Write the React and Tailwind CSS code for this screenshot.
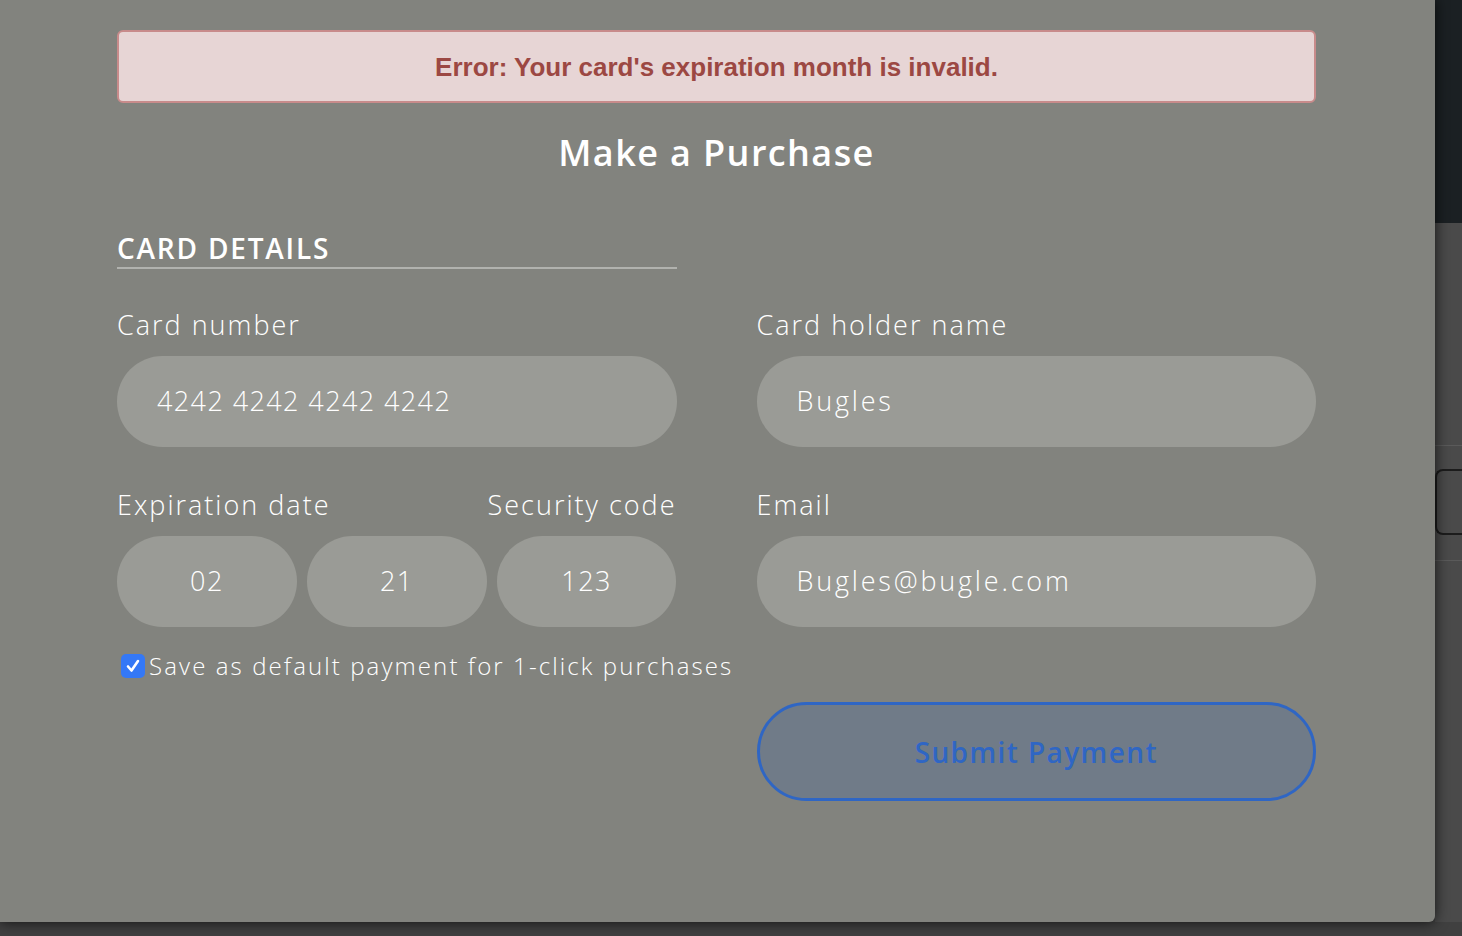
import { useState } from "react";

const font = { fontFamily: '"Open Sans", "DejaVu Sans", sans-serif' };

function Field({ label, value, track = "tracking-[2px]" }) {
  return (
    <div className="flex flex-col gap-[15px]">
      <div className="text-[27px] leading-[32px] font-light text-white tracking-[2px]">
        {label}
      </div>
      <div className={"h-[91px] rounded-full bg-[#9a9b96] flex items-center px-[40px] text-[27px] font-light text-white " + track}>
        {value}
      </div>
    </div>
  );
}

function SmallBox({ value }) {
  return (
    <div className="h-[91px] rounded-full bg-[#9a9b96] flex items-center justify-center text-[27px] font-light text-white tracking-[1.4px]">
      {value}
    </div>
  );
}

export default function App() {
  const [saveDefault, setSaveDefault] = useState(true);

  return (
    <div className="w-[1462px] h-[936px] overflow-hidden flex flex-col bg-[#404040]" style={font}>
      <div className="flex h-[922px]">
        {/* modal */}
        <div className="relative z-10 w-[1435px] h-[922px] shrink-0 bg-[#82837e] rounded-br-[6px] shadow-[0_0_14px_rgba(0,0,0,0.75)] pl-[117px] pr-[119px] pt-[30px]">
          {/* error banner */}
          <div className="h-[73px] rounded-[6px] border-2 border-[#c88b8b] bg-[#e7d5d5] flex items-center justify-center">
            <span
              className="text-[26px] leading-[30px] font-bold text-[#9c4843]"
              style={{ fontFamily: '"Liberation Sans", Arial, sans-serif' }}
            >
              Error: Your card's expiration month is invalid.
            </span>
          </div>

          <h1 className="mt-[28px] text-center text-[36px] leading-[44px] font-semibold text-white tracking-[1.4px]">
            Make a Purchase
          </h1>

          <div className="mt-[56px] w-[560px] border-b-2 border-[#b1b2ae] pb-[2px]">
            <h2 className="text-[28px] leading-[34px] font-semibold text-white tracking-[1.8px]">
              CARD DETAILS
            </h2>
          </div>

          {/* form grid */}
          <div className="mt-[40px] grid grid-cols-2 gap-x-[80px] gap-y-[42px]">
            <Field label="Card number" value="4242 4242 4242 4242" track="tracking-[1.4px]" />
            <Field label="Card holder name" value="Bugles" track="tracking-[2.8px]" />
            <div className="flex flex-col gap-[15px]">
              <div className="flex justify-between text-[27px] leading-[32px] font-light text-white tracking-[2px]">
                <span>Expiration date</span>
                <span>Security code</span>
              </div>
              <div className="grid grid-cols-3 gap-[10px]">
                <SmallBox value="02" />
                <SmallBox value="21" />
                <SmallBox value="123" />
              </div>
            </div>
            <Field label="Email" value="Bugles@bugle.com" track="tracking-[2.8px]" />
          </div>

          {/* checkbox */}
          <label className="mt-[24px] flex items-center gap-[4px] pl-[4px] h-[30px] cursor-pointer">
            <span
              onClick={() => setSaveDefault(!saveDefault)}
              className={
                saveDefault
                  ? "w-[24px] h-[24px] rounded-[5px] bg-[#3478f6] flex items-center justify-center"
                  : "w-[24px] h-[24px] rounded-[5px] bg-white"
              }
            >
              {saveDefault && (
                <svg width="16" height="16" viewBox="0 0 16 16">
                  <path d="M3 8.5 L6.5 12.5 L13 3" fill="none" stroke="#fff" strokeWidth="2.6" strokeLinecap="round" strokeLinejoin="round" />
                </svg>
              )}
            </span>
            <span className="text-[24px] leading-[30px] font-light text-white tracking-[2.1px] whitespace-nowrap">
              Save as default payment for 1-click purchases
            </span>
          </label>

          {/* submit */}
          <div className="mt-[21px] grid grid-cols-2 gap-x-[80px]">
            <div />
            <button className="h-[99px] rounded-full border-[3px] border-[#2f66c4] bg-[#707b88] text-[28px] font-semibold text-[#2f66c4] tracking-[1.4px]">
              Submit Payment
            </button>
          </div>
        </div>

        {/* page behind the modal */}
        <div className="flex-1 flex flex-col bg-[#4a4a4a]">
          <div className="h-[223px] bg-[#1b2023]" />
          <div className="h-[223px] border-b border-[#5a5a5a]" />
          <div className="h-[23px]" />
          <div className="h-[66px] border-2 border-r-0 border-[#1c1c1c] rounded-l-[8px]" />
          <div className="h-[26px] border-b border-[#5a5a5a]" />
          <div className="flex-1" />
        </div>
      </div>
      <div className="flex-1 bg-[#404040]" />
    </div>
  );
}
